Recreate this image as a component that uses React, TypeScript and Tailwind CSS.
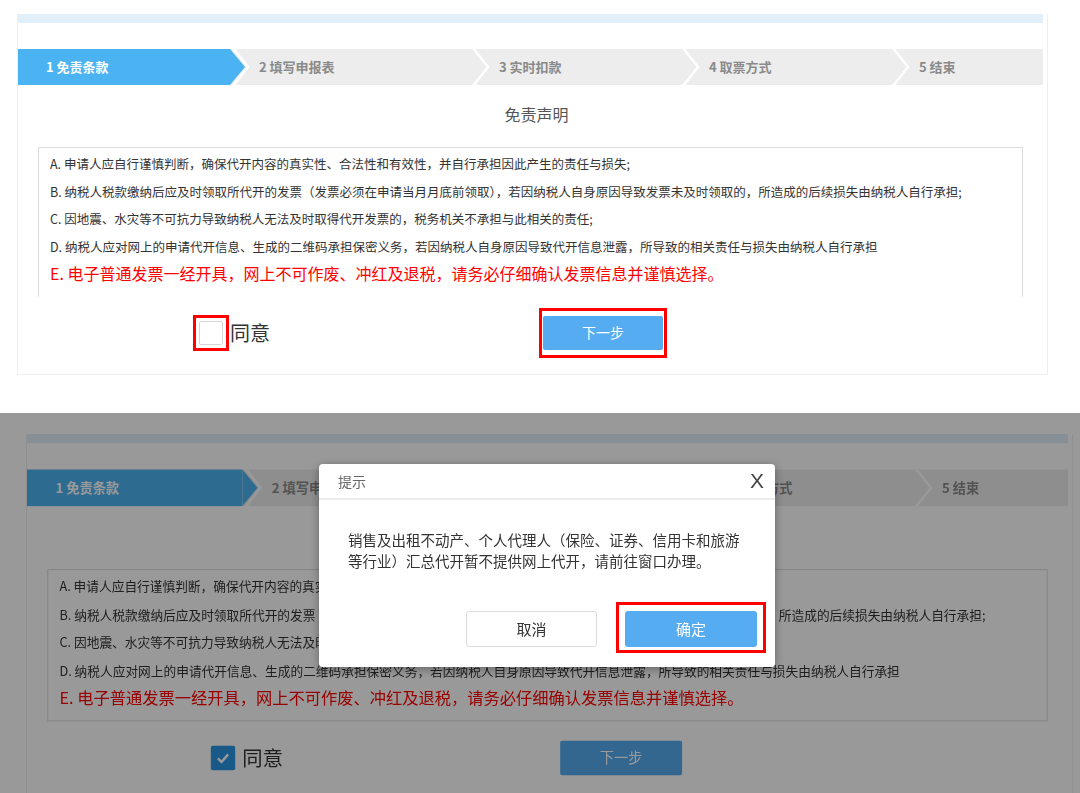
import React from "react";

const font = "font-['Noto_Sans_CJK_SC','Noto_Sans',sans-serif]";

const steps = ["2 填写申报表", "3 实时扣款", "4 取票方式", "5 结束"];
const stepWidths = ["w-[220px]", "w-[190px]", "w-[190px]", "flex-1"];

const terms = [
  "A. 申请人应自行谨慎判断，确保代开内容的真实性、合法性和有效性，并自行承担因此产生的责任与损失;",
  "B. 纳税人税款缴纳后应及时领取所代开的发票（发票必须在申请当月月底前领取），若因纳税人自身原因导致发票未及时领取的，所造成的后续损失由纳税人自行承担;",
  "C. 因地震、水灾等不可抗力导致纳税人无法及时取得代开发票的，税务机关不承担与此相关的责任;",
  "D. 纳税人应对网上的申请代开信息、生成的二维码承担保密义务，若因纳税人自身原因导致代开信息泄露，所导致的相关责任与损失由纳税人自行承担",
];

const Chevron = ({ first }: { first?: boolean }) => (
  <svg width="20" height="36" viewBox="0 0 20 36" className="flex-none">
    {first && <polygon points="0,0 15,18 0,36" fill="#4cb3f2" />}
    <polyline
      points="3,-1 18,18 3,37"
      fill="none"
      stroke="#fff"
      strokeWidth="2.5"
    />
  </svg>
);

const Page = ({ agreed, marked }: { agreed: boolean; marked: boolean }) => {
  const outline = marked ? "border-[#ff0000]" : "border-transparent";
  const boxBottom = marked ? "border-b-transparent" : "";
  return (
    <div className="w-[1031px] border-x border-b border-[#efefef] pr-[4px] pb-[16px]">
      <div className="h-[9px] bg-[#e1effa]" />

      <div className="mt-[26px] flex h-[36px] bg-[#ededed] text-[13px] font-bold text-[#8a8a8a]">
        <div className="flex w-[212px] flex-none items-center bg-[#4cb3f2] pl-[28px] text-white">
          1 免责条款
        </div>
        <Chevron first />
        {steps.map((s, i) => (
          <React.Fragment key={s}>
            <div className={`flex flex-none items-center pl-[9px] ${stepWidths[i]}`}>{s}</div>
            {i < steps.length - 1 && <Chevron />}
          </React.Fragment>
        ))}
      </div>

      <div className="mt-[17px] pl-[12px] text-center text-[16px] leading-[24px] text-[#555]">
        免责声明
      </div>

      <div
        className={`mx-[20px] mt-[21px] border border-[#dcdcdc] px-[11px] pt-[2px] pb-[8px] text-[12.5px] leading-[27.5px] text-[#333] ${boxBottom}`}
      >
        {terms.map((t) => (
          <div key={t} className="whitespace-nowrap">
            {t}
          </div>
        ))}
        <div className="whitespace-nowrap text-[16px] text-[#ff0000]">
          E. 电子普通发票一经开具，网上不可作废、冲红及退税，请务必仔细确认发票信息并谨慎选择。
        </div>
      </div>

      <div className="mt-[11px] flex items-center">
        <div className="flex w-[521px] flex-none items-center pl-[175px]">
          <div className={`border-[3px] p-[3px] ${outline}`}>
            {agreed ? (
              <div className="flex h-[24px] w-[24px] items-center justify-center rounded-[2px] bg-[#2b95e3]">
                <svg width="16" height="16" viewBox="0 0 16 16">
                  <polyline
                    points="3,8.5 6.5,12 13,4.5"
                    fill="none"
                    stroke="#fff"
                    strokeWidth="2.4"
                  />
                </svg>
              </div>
            ) : (
              <div className="h-[24px] w-[24px] rounded-[2px] border border-[#d5d5d5] bg-white" />
            )}
          </div>
          <span className="ml-[1px] text-[20px] text-[#333]">同意</span>
        </div>
        <div className={`border-[3px] px-[1px] py-[5px] ${outline}`}>
          <button className="flex h-[34px] w-[120px] items-center justify-center rounded-[2px] bg-[#55acf0] text-[14px] text-white">
            下一步
          </button>
        </div>
      </div>
    </div>
  );
};

const App = () => {
  return (
    <div className={`h-[793px] w-[1080px] overflow-hidden bg-white ${font}`}>
      <div className="h-[413px] pt-[14px] pl-[17px]">
        <Page agreed={false} marked />
      </div>

      <div className="relative h-[380px] overflow-hidden bg-white">
        <div className="pt-[21px] pl-[26px]">
          <div className="origin-top-left scale-[1.0156]">
            <Page agreed marked={false} />
          </div>
        </div>

        <div className="absolute inset-0 bg-black/40" />

        <div className="absolute top-[51px] left-[319px] flex h-[203px] w-[456px] flex-col rounded-[4px] bg-white shadow-[0_2px_10px_rgba(0,0,0,0.35)]">
          <div className="flex h-[36px] items-center justify-between border-b-2 border-[#ececec] pr-[11px] pl-[19px]">
            <span className="text-[14px] text-[#666]">提示</span>
            <span className="font-['Liberation_Sans',sans-serif] text-[21px] text-[#444]">X</span>
          </div>
          <div className="pt-[29px] pl-[29px] text-[14.5px] leading-[21px] text-[#333]">
            销售及出租不动产、个人代理人（保险、证券、信用卡和旅游
            <br />
            等行业）汇总代开暂不提供网上代开，请前往窗口办理。
          </div>
          <div className="mt-[31px] flex items-start pl-[147px]">
            <button className="mt-[9px] h-[36px] w-[131px] rounded-[3px] border border-[#dcdcdc] bg-white text-[15px] text-[#333]">
              取消
            </button>
            <div className="ml-[19px] border-[3px] border-[#ff0000] px-[6px] pt-[6px] pb-[3px]">
              <button className="h-[36px] w-[132px] rounded-[3px] bg-[#55acf0] text-[15px] text-white">
                确定
              </button>
            </div>
          </div>
        </div>
      </div>
    </div>
  );
};

export default App;
